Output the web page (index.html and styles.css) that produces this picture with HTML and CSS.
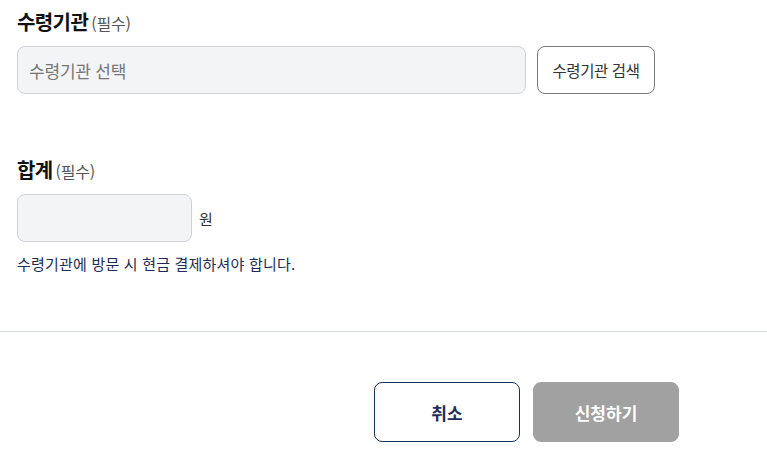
FILE: index.html
```html
<!DOCTYPE html>
<html lang="ko">
<head>
<meta charset="utf-8">
<link rel="stylesheet" href="styles.css">
</head>
<body>
<div class="form">
  <div class="field first">
    <div class="label"><span class="label-main">수령기관</span><span class="req">(필수)</span></div>
    <div class="row">
      <div class="input wide">수령기관 선택</div>
      <button class="btn-outline">수령기관 검색</button>
    </div>
  </div>
  <div class="field second">
    <div class="label"><span class="label-main">합계</span><span class="req">(필수)</span></div>
    <div class="row row-short">
      <div class="input short"></div>
      <span class="unit">원</span>
    </div>
    <p class="note">수령기관에 방문 시 현금 결제하셔야 합니다.</p>
  </div>
</div>
<hr class="divider">
<div class="actions">
  <button class="btn cancel">취소</button>
  <button class="btn submit">신청하기</button>
</div>
</body>
</html>
```
FILE: styles.css
```css
* { box-sizing: border-box; }
body {
  margin: 0;
  background: #fff;
  font-family: "Noto Sans CJK KR", "Noto Sans", sans-serif;
  color: #222;
}
.form { padding: 10px 17px 0; }
.field.second { margin-top: 64px; }
.label {
  display: flex;
  align-items: baseline;
  gap: 3px;
  height: 24px;
  line-height: 24px;
}
.label-main { font-size: 20px; font-weight: 700; color: #111; letter-spacing: -0.6px; }
.req { font-size: 16px; color: #555; letter-spacing: -0.2px; }
.row { display: flex; align-items: center; margin-top: 12px; gap: 11px; }
.row-short { gap: 7px; }
.input {
  height: 48px;
  background: #f3f4f6;
  border: 1px solid #cfd1d4;
  border-radius: 8px;
  font-size: 17px;
  color: #767676;
  padding-left: 11px;
  display: flex;
  align-items: center;
  letter-spacing: -0.2px;
}
.input.wide { width: 509px; }
.input.short { width: 175px; }
.unit { font-size: 15px; color: #333; }
.btn-outline {
  height: 48px;
  width: 118px;
  border: 1px solid #7a7a7a;
  border-radius: 8px;
  background: #fff;
  font-family: inherit;
  font-size: 15.5px;
  color: #333;
  letter-spacing: -0.4px;
  padding: 0;
}
.note {
  margin: 12px 0 0;
  font-size: 15px;
  line-height: 20px;
  color: #1b2d52;
  letter-spacing: 0.2px;
}
.divider {
  margin: 57px 0 0;
  border: 0;
  border-top: 1px solid #d5dae1;
}
.actions {
  display: flex;
  gap: 13px;
  padding-left: 374px;
  margin-top: 50px;
}
.btn {
  width: 146px;
  height: 60px;
  border-radius: 8px;
  font-family: inherit;
  font-size: 17px;
  font-weight: 700;
  padding: 0;
}
.cancel { background: #fff; border: 1px solid #1c2f57; color: #1c2f57; }
.submit { background: #a1a1a1; border: 1px solid #a1a1a1; color: #fff; }
```
